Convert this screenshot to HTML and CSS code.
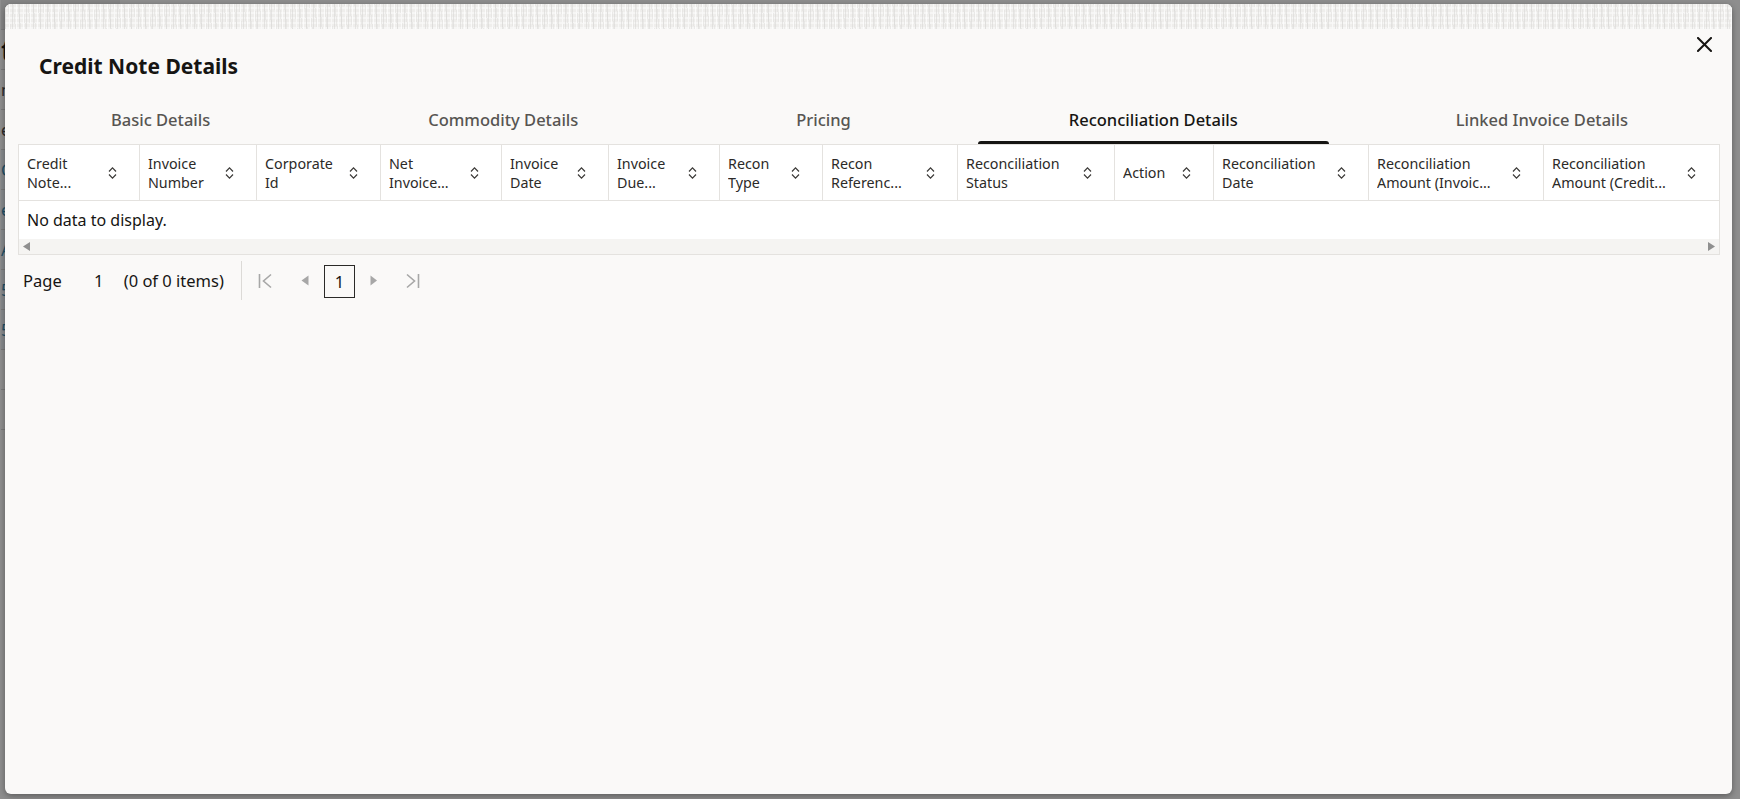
FILE: index.html
```html
<!DOCTYPE html>
<html lang="en">
<head>
<meta charset="utf-8">
<title>Credit Note Details</title>
<link rel="stylesheet" href="styles.css">
</head>
<body>
<div class="backdrop">
  <div class="page-strip">
    <div class="ps-row ps-top"></div>
    <div class="ps-row"><span class="ps-big">t</span></div>
    <div class="ps-row"><span>n</span></div>
    <div class="ps-row"><span>e</span></div>
    <div class="ps-row ps-link"><span>C</span></div>
    <div class="ps-row ps-link"><span>e</span></div>
    <div class="ps-row ps-link"><span>A</span></div>
    <div class="ps-row ps-link"><span>5</span></div>
    <div class="ps-row ps-link"><span>5</span></div>
    <div class="ps-row"></div>
    <div class="ps-row"></div>
  </div>
</div>

<div class="dialog" role="dialog" aria-label="Credit Note Details">
  <div class="dialog-texture"></div>
  <div class="dialog-header">
    <h1 class="dialog-title">Credit Note Details</h1>
    <button class="close-btn" aria-label="Close">
      <svg width="15" height="15" viewBox="0 0 15 15"><path d="M1 1 L14 14 M14 1 L1 14" stroke="#161513" stroke-width="2" fill="none" stroke-linecap="square"/></svg>
    </button>
  </div>

  <div class="tabbar">
    <div class="tab">Basic Details</div>
    <div class="tab">Commodity Details</div>
    <div class="tab">Pricing</div>
    <div class="tab tab-active">Reconciliation Details</div>
    <div class="tab">Linked Invoice Details</div>
  </div>

  <div class="table">
    <div class="thead">
      <div class="th"><div class="th-text"><span>Credit</span><span>Note...</span></div><svg class="sort" width="9" height="14" viewBox="0 0 9 14"><path d="M1 5.5 L4.5 1.8 L8 5.5 M1 8.5 L4.5 12.2 L8 8.5" /></svg></div>
      <div class="th"><div class="th-text"><span>Invoice</span><span>Number</span></div><svg class="sort" width="9" height="14" viewBox="0 0 9 14"><path d="M1 5.5 L4.5 1.8 L8 5.5 M1 8.5 L4.5 12.2 L8 8.5" /></svg></div>
      <div class="th"><div class="th-text"><span>Corporate</span><span>Id</span></div><svg class="sort" width="9" height="14" viewBox="0 0 9 14"><path d="M1 5.5 L4.5 1.8 L8 5.5 M1 8.5 L4.5 12.2 L8 8.5" /></svg></div>
      <div class="th"><div class="th-text"><span>Net</span><span>Invoice...</span></div><svg class="sort" width="9" height="14" viewBox="0 0 9 14"><path d="M1 5.5 L4.5 1.8 L8 5.5 M1 8.5 L4.5 12.2 L8 8.5" /></svg></div>
      <div class="th"><div class="th-text"><span>Invoice</span><span>Date</span></div><svg class="sort" width="9" height="14" viewBox="0 0 9 14"><path d="M1 5.5 L4.5 1.8 L8 5.5 M1 8.5 L4.5 12.2 L8 8.5" /></svg></div>
      <div class="th"><div class="th-text"><span>Invoice</span><span>Due...</span></div><svg class="sort" width="9" height="14" viewBox="0 0 9 14"><path d="M1 5.5 L4.5 1.8 L8 5.5 M1 8.5 L4.5 12.2 L8 8.5" /></svg></div>
      <div class="th"><div class="th-text"><span>Recon</span><span>Type</span></div><svg class="sort" width="9" height="14" viewBox="0 0 9 14"><path d="M1 5.5 L4.5 1.8 L8 5.5 M1 8.5 L4.5 12.2 L8 8.5" /></svg></div>
      <div class="th"><div class="th-text"><span>Recon</span><span>Referenc...</span></div><svg class="sort" width="9" height="14" viewBox="0 0 9 14"><path d="M1 5.5 L4.5 1.8 L8 5.5 M1 8.5 L4.5 12.2 L8 8.5" /></svg></div>
      <div class="th"><div class="th-text"><span>Reconciliation</span><span>Status</span></div><svg class="sort" width="9" height="14" viewBox="0 0 9 14"><path d="M1 5.5 L4.5 1.8 L8 5.5 M1 8.5 L4.5 12.2 L8 8.5" /></svg></div>
      <div class="th"><div class="th-text"><span>Action</span></div><svg class="sort" width="9" height="14" viewBox="0 0 9 14"><path d="M1 5.5 L4.5 1.8 L8 5.5 M1 8.5 L4.5 12.2 L8 8.5" /></svg></div>
      <div class="th"><div class="th-text"><span>Reconciliation</span><span>Date</span></div><svg class="sort" width="9" height="14" viewBox="0 0 9 14"><path d="M1 5.5 L4.5 1.8 L8 5.5 M1 8.5 L4.5 12.2 L8 8.5" /></svg></div>
      <div class="th"><div class="th-text"><span>Reconciliation</span><span>Amount (Invoic...</span></div><svg class="sort" width="9" height="14" viewBox="0 0 9 14"><path d="M1 5.5 L4.5 1.8 L8 5.5 M1 8.5 L4.5 12.2 L8 8.5" /></svg></div>
      <div class="th th-last"><div class="th-text"><span>Reconciliation</span><span>Amount (Credit...</span></div><svg class="sort" width="9" height="14" viewBox="0 0 9 14"><path d="M1 5.5 L4.5 1.8 L8 5.5 M1 8.5 L4.5 12.2 L8 8.5" /></svg></div>
    </div>
    <div class="tbody">
      <div class="no-data">No data to display.</div>
    </div>
    <div class="hscroll">
      <svg width="7" height="9" viewBox="0 0 7 9"><path d="M7 0 L7 9 L0 4.5 Z" fill="#8f8f8f"/></svg>
      <svg width="7" height="9" viewBox="0 0 7 9"><path d="M0 0 L0 9 L7 4.5 Z" fill="#8f8f8f"/></svg>
    </div>
  </div>

  <div class="pager">
    <span class="pg-label">Page</span>
    <span class="pg-input">1</span>
    <span class="pg-count">(0 of 0 items)</span>
    <span class="pg-sep"></span>
    <span class="pg-btn pg-first"><svg width="15" height="16" viewBox="0 0 15 16"><path d="M1.5 1 L1.5 15 M13 1.5 L5.5 8 L13 14.5" stroke="#a7a7a7" stroke-width="1.6" fill="none"/></svg></span>
    <span class="pg-btn pg-prev"><svg width="8" height="11" viewBox="0 0 8 11"><path d="M7.5 0.5 L7.5 10.5 L0.5 5.5 Z" fill="#a7a7a7"/></svg></span>
    <span class="pg-page">1</span>
    <span class="pg-btn pg-next"><svg width="8" height="11" viewBox="0 0 8 11"><path d="M0.5 0.5 L0.5 10.5 L7 5.5 Z" fill="#a7a7a7"/></svg></span>
    <span class="pg-btn pg-last"><svg width="15" height="16" viewBox="0 0 15 16"><path d="M13.5 1 L13.5 15 M2 1.5 L9.5 8 L2 14.5" stroke="#a7a7a7" stroke-width="1.6" fill="none"/></svg></span>
  </div>
</div>
</body>
</html>
```

FILE: styles.css
```css
* { box-sizing: border-box; }

html, body {
  margin: 0;
  padding: 0;
  width: 1740px;
  height: 799px;
  overflow: hidden;
  font-family: "Noto Sans", "Liberation Sans", sans-serif;
  color: #161513;
}

.backdrop {
  width: 1740px;
  height: 799px;
  background: #8e8e8e;
}

.page-strip {
  width: 120px;
  padding-left: 1px;
  display: flex;
  flex-direction: column;
}

.ps-row {
  height: 40px;
  border-bottom: 1px solid #7a7a7a;
  display: flex;
  align-items: center;
  font-size: 16px;
  color: #2a2a2a;
  white-space: nowrap;
}

.ps-top { height: 30px; background: #858585; }
.ps-big { font-size: 28px; font-weight: 700; color: #111; }
.ps-link { color: #1f4f66; background: #878a8d; }

.dialog {
  position: absolute;
  left: 5px;
  top: 4px;
  width: 1727px;
  height: 790px;
  background: #faf9f8;
  border-radius: 6px;
  box-shadow: 0 2px 6px rgba(0, 0, 0, 0.35);
  display: flex;
  flex-direction: column;
  overflow: hidden;
}

.dialog-texture {
  height: 25px;
  flex: none;
  background-color: #efeeec;
  background-image:
    repeating-linear-gradient(90deg, rgba(214,213,211,0.55) 0 1px, transparent 1px 4px, rgba(255,255,255,0.7) 4px 5px, transparent 5px 7px),
    repeating-linear-gradient(84deg, rgba(226,225,223,0.6) 0 1px, transparent 1px 5px),
    repeating-linear-gradient(0deg, rgba(255,255,255,0.45) 0 2px, transparent 2px 5px);
}

.dialog-header {
  height: 71px;
  flex: none;
  display: flex;
  justify-content: space-between;
  align-items: flex-start;
  padding: 0 20px 0 34px;
}

.dialog-title {
  margin: 23px 0 0 0;
  font-size: 21px;
  line-height: 28px;
  font-weight: 700;
  color: #161513;
}

.close-btn {
  margin-top: 8px;
  padding: 0;
  border: 0;
  background: transparent;
  width: 15px;
  height: 15px;
  display: block;
}

.close-btn svg { display: block; }

.tabbar {
  height: 44px;
  flex: none;
  display: flex;
  margin: 0 -5px 0 -3px;
}

.tab {
  flex: 1 1 auto;
  margin: 0 18px;
  height: 44px;
  padding-bottom: 4px;
  display: flex;
  align-items: center;
  justify-content: center;
  font-size: 16.5px;
  line-height: 20px;
  font-weight: 500;
  color: #575552;
  white-space: nowrap;
  position: relative;
}

.tab-active { color: #161513; }

.tab-active::after {
  content: "";
  position: absolute;
  left: 0;
  right: 0;
  bottom: 0;
  height: 3px;
  background: #161513;
  border-radius: 3px 3px 0 0;
}

.table {
  margin: 0 12px 0 13px;
  border: 1px solid #e4e2df;
  background: #ffffff;
  flex: none;
  overflow: hidden;
}

.thead {
  display: grid;
  grid-template-columns: 121px 117px 124px 121px 107px 111px 103px 135px 157px 99px 155px 175px 175px;
  border-bottom: 1px solid #e4e2df;
}

.th {
  height: 55px;
  display: flex;
  align-items: center;
  padding: 0 23px 0 8px;
  border-right: 1px solid #e4e2df;
  background: #ffffff;
  min-width: 0;
}

.th-last { border-right: 0; padding-right: 24px; }

.th-text {
  flex: 1 1 auto;
  min-width: 0;
  display: flex;
  flex-direction: column;
  font-size: 14.3px;
  line-height: 19px;
  color: #2c2a28;
  white-space: nowrap;
  overflow: hidden;
}

.sort {
  flex: none;
  display: block;
  margin-left: 3px;
  margin-right: -1px;
}

.sort path {
  fill: none;
  stroke: #3a3836;
  stroke-width: 1.2;
}

.tbody {
  background: #ffffff;
}

.no-data {
  height: 38px;
  display: flex;
  align-items: center;
  padding-left: 8px;
  font-size: 16px;
  color: #161513;
}

.hscroll {
  height: 15px;
  background: #f5f4f2;
  display: flex;
  align-items: center;
  justify-content: space-between;
  padding: 0 4px;
}

.hscroll svg { display: block; }

.pager {
  margin: 6px 0 0 13px;
  height: 39px;
  padding-left: 5px;
  display: flex;
  align-items: center;
  font-size: 16.5px;
  color: #161513;
  flex: none;
}

.pg-label { margin-right: 22px; }

.pg-input {
  width: 30px;
  text-align: center;
  margin-right: 10px;
}

.pg-count { margin-right: 17px; }

.pg-sep {
  width: 1px;
  height: 39px;
  background: #dcdad7;
  margin-right: 12px;
}

.pg-btn {
  width: 24px;
  height: 24px;
  display: flex;
  align-items: center;
  justify-content: center;
}

.pg-btn svg { display: block; }

.pg-first { margin-right: 15px; }
.pg-prev { margin-right: 7px; }
.pg-next { margin-left: 7px; margin-right: 15px; }

.pg-page {
  width: 31px;
  height: 33px;
  border: 1px solid #2b2a28;
  display: flex;
  align-items: center;
  justify-content: center;
  margin-top: 1px;
  padding-top: 1px;
}
```
